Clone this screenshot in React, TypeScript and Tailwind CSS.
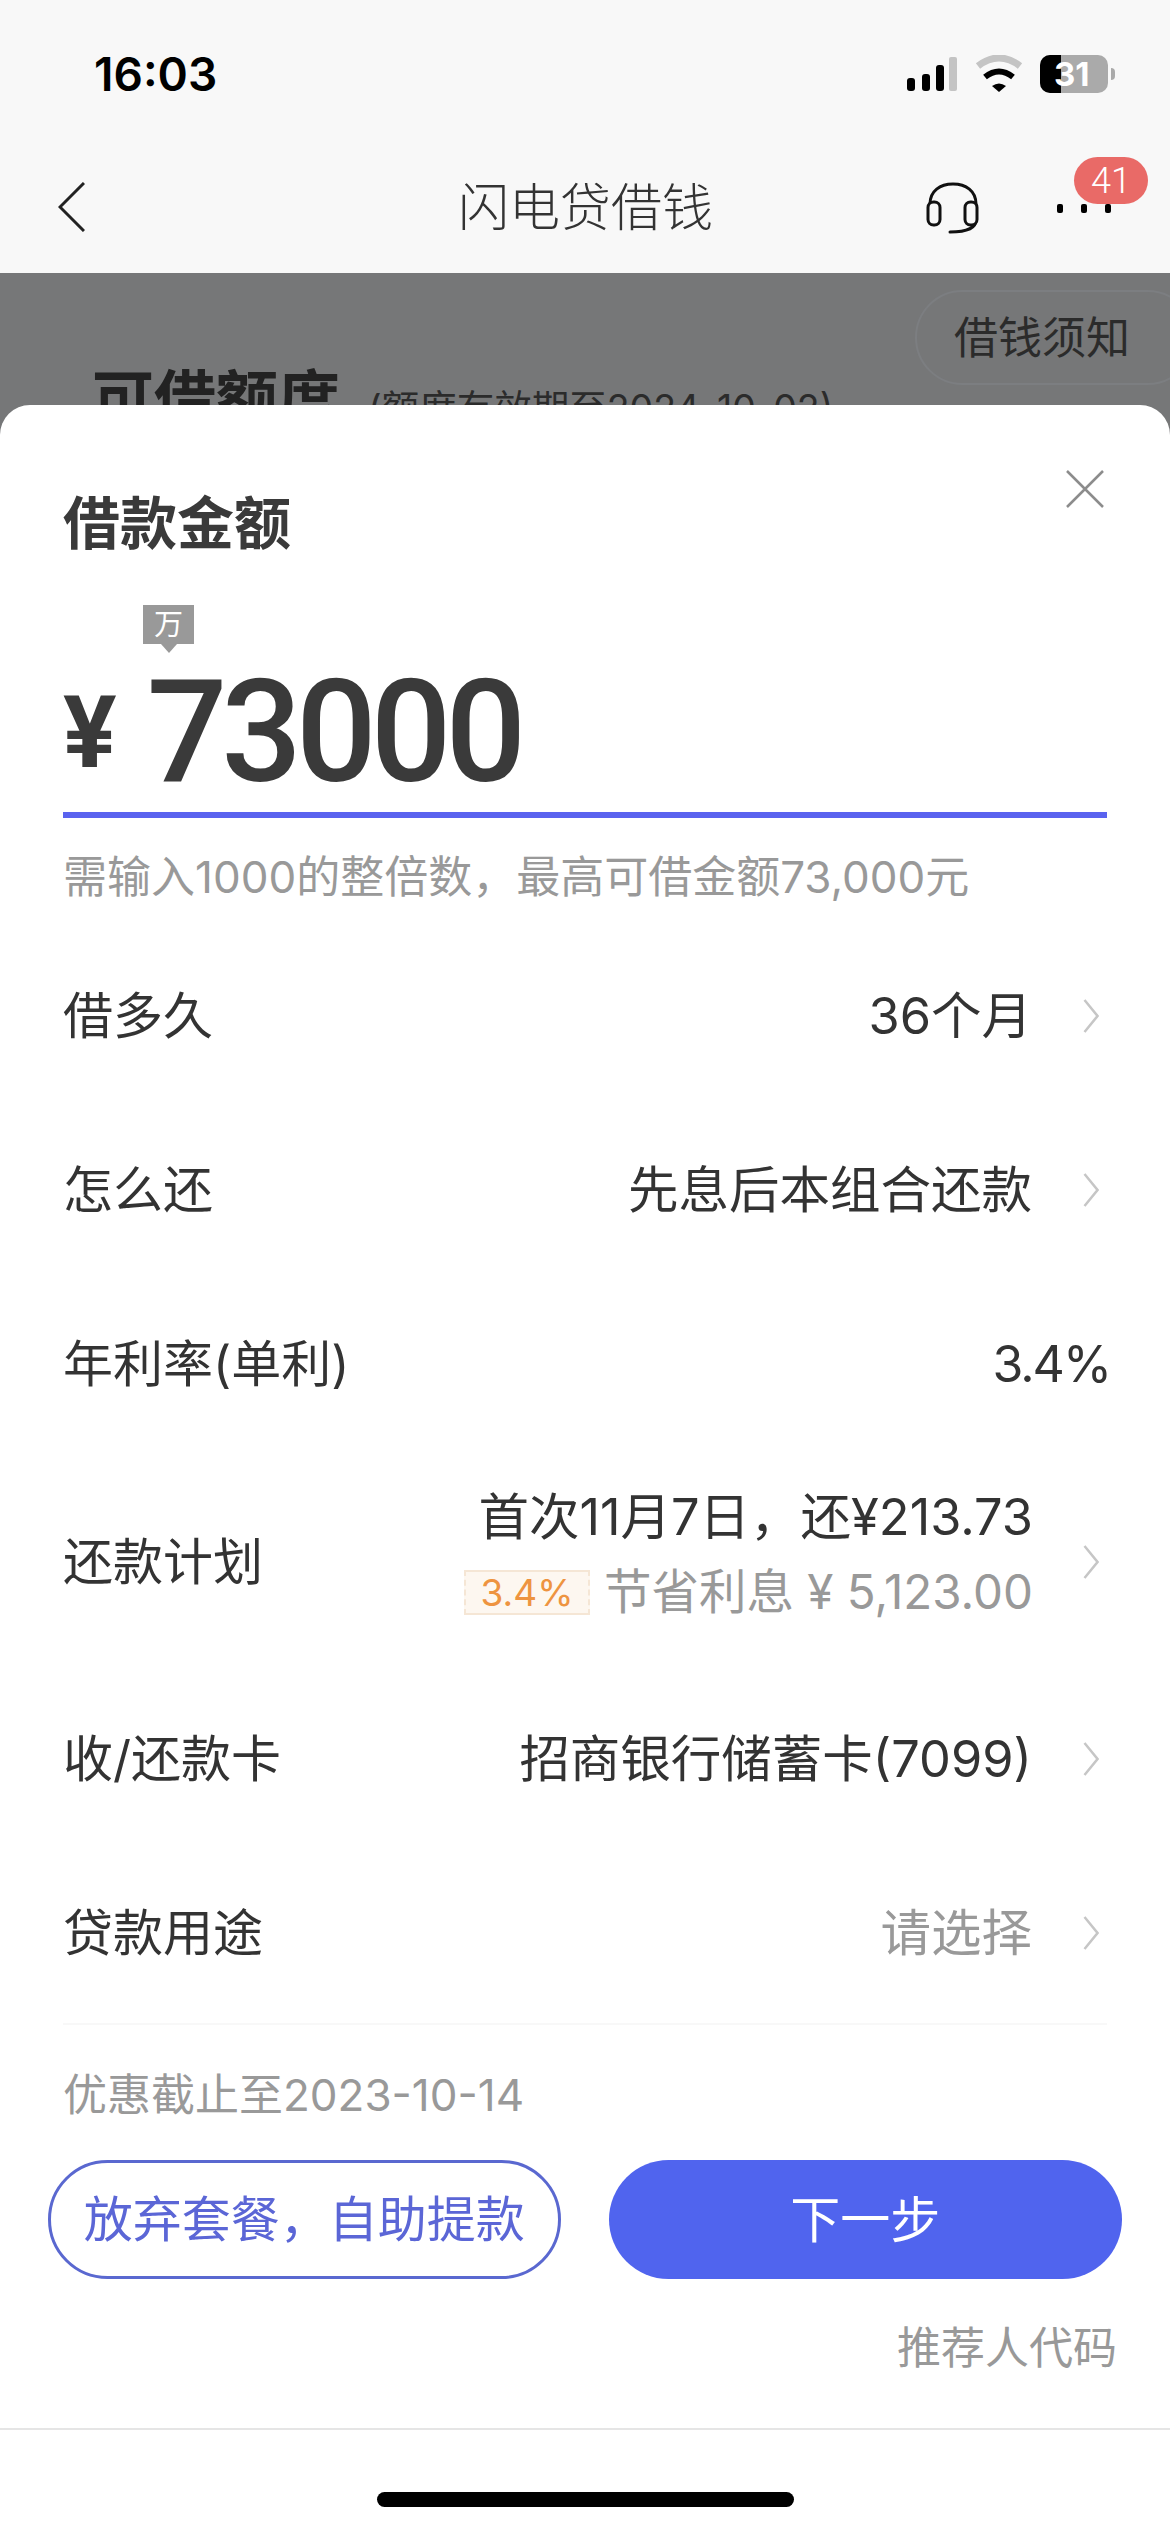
const Chevron = () => (
  <svg width="16" height="34" viewBox="0 0 16 34" fill="none" className="shrink-0">
    <path d="M1.5 1L14.5 17L1.5 33" stroke="#c6c6c6" strokeWidth="2.5" />
  </svg>
);

interface IRow {
  label: string;
  value?: string;
  muted?: boolean;
  arrow?: boolean;
  children?: React.ReactNode;
  tall?: boolean;
}
const Row = ({ label, value, muted, arrow = true, children, tall }: IRow) => {
  return (
    <div className={`flex items-center justify-between pt-[4px] ${tall ? "h-[221px]" : "h-[174px]"}`}>
      <span className="text-[50px] leading-none text-[#333]">{label}</span>
      <div className="flex items-center">
        {children ?? (
          <span className={`text-[50.5px] leading-none ${muted ? "text-[#999]" : "text-[#333]"}`}>{value}</span>
        )}
        {arrow && (
          <div className="ml-[51px] mr-[8px]">
            <Chevron />
          </div>
        )}
      </div>
    </div>
  );
};

const StatusBar = () => {
  return (
    <div className="flex h-[148px] items-start justify-between pl-[94px] pr-[55px] pt-[55px]">
      <span className="font-['Inter','Liberation_Sans',sans-serif] text-[46px] font-semibold leading-[38px] tracking-[0px] text-black">
        16:03
      </span>
      <div className="flex items-start">
        <svg width="50" height="36" viewBox="0 0 50 36" className="mt-[1px]">
          <rect x="0" y="22" width="8" height="13" rx="3" fill="#000" />
          <rect x="15" y="18" width="8" height="17" rx="3" fill="#000" />
          <rect x="29" y="9" width="8" height="26" rx="3" fill="#000" />
          <rect x="42" y="1" width="8" height="34" rx="2" fill="#c4c4c4" />
        </svg>
        <svg width="48" height="37" viewBox="0 0 48 37" fill="none" className="ml-[18px]">
          <path d="M3 11Q24 -5 45 11" stroke="#c4c4c4" strokeWidth="7" />
          <path d="M10 22Q24 11 38 22" stroke="#000" strokeWidth="6" />
          <path d="M17 31Q24 26 31 31L24 37Z" fill="#000" />
        </svg>
        <div className="ml-[17px] flex items-center">
          <div className="relative flex h-[38px] w-[68px] overflow-hidden rounded-[10px] bg-[#aaa]">
            <div className="h-full w-[21px] bg-black" />
            <span className="absolute left-[14px] top-0 font-['Inter','Liberation_Sans',sans-serif] text-[33px] font-bold leading-[38px] text-white">
              31
            </span>
          </div>
          <div className="ml-[3px] h-[12px] w-[4px] rounded-r-full bg-[#aaa]" />
        </div>
      </div>
    </div>
  );
};

const NavBar = () => {
  return (
    <div className="relative flex h-[125px] items-start justify-between pl-[58px] pr-[59px] pt-[34px]">
      <svg width="27" height="50" viewBox="0 0 27 50" fill="none">
        <path d="M26 1L2 25L26 49" stroke="#222" strokeWidth="3" />
      </svg>
      <span className="absolute left-[458px] top-[35px] text-[51px] font-light leading-[50px] text-[#333]">
        闪电贷借钱
      </span>
      <div className="flex items-start">
        <svg width="54" height="52" viewBox="0 0 54 52" fill="none" stroke="#111" strokeWidth="3">
          <path d="M4 28V22C4 9 14 2 27 2C40 2 50 9 50 22V38C50 45 42 50 24 50" strokeLinecap="round" />
          <rect x="2" y="20" width="12" height="23" rx="5.5" fill="#f8f8f8" />
          <rect x="39" y="20" width="12" height="23" rx="5.5" fill="#f8f8f8" />
        </svg>
        <div className="relative ml-[77px] flex h-[52px] gap-[18px] pt-[22px]">
          <div className="h-[9px] w-[6px] rounded-[2px] bg-black" />
          <div className="h-[9px] w-[6px] rounded-[2px] bg-black" />
          <div className="h-[9px] w-[6px] rounded-[2px] bg-black" />
          <div className="absolute left-[17px] top-[-25px] flex h-[47px] w-[74px] items-center justify-center rounded-full bg-[#e96a67] font-['Roboto',sans-serif] text-[36px] font-light leading-none text-white">
            41
          </div>
        </div>
      </div>
    </div>
  );
};

// dimmed page behind the sheet, cut off by the sheet's top edge
const Backdrop = () => {
  return (
    <div className="relative h-[132px] overflow-hidden bg-[#767778]">
      <div className="absolute left-[915px] top-[17px] flex h-[95px] w-[280px] items-center rounded-[48px] border-2 border-[#7c7e81] pl-[37px] text-[44px] leading-none text-[#2b2b2b]">
        借钱须知
      </div>
      <div className="flex items-baseline pl-[92px] pt-[92px]">
        <span className="text-[62px] font-bold leading-[70px] text-[#222]">可借额度</span>
        <span className="ml-[28px] text-[37.5px] leading-none text-[#2b2b2b]">(额度有效期至2024-10-02)</span>
      </div>
    </div>
  );
};

export default function App() {
  return (
    <div className="flex h-[2532px] w-[1170px] flex-col overflow-hidden bg-[#767778] font-['Inter','Noto_Sans_CJK_SC',sans-serif]">
      <div className="bg-[#f8f8f8]">
        <StatusBar />
        <NavBar />
      </div>
      <Backdrop />
      <div className="relative flex-1 rounded-t-[30px] bg-white px-[63px] pt-[91px]">
        <svg width="38" height="38" viewBox="0 0 38 38" fill="none" className="absolute right-[66px] top-[65px]">
          <path d="M1 1L37 37M37 1L1 37" stroke="#8c8c8c" strokeWidth="2.5" />
        </svg>

        <h1 className="text-[57px] font-bold leading-[56px] text-[#3a3a3a]">借款金额</h1>

        <div className="ml-[80px] mt-[53px] flex w-[51px] flex-col items-center">
          <div className="flex h-[39px] w-[51px] items-center justify-center bg-[#999] text-[29px] leading-none text-white">
            万
          </div>
          <div className="h-0 w-0 border-x-[8px] border-t-[9px] border-x-transparent border-t-[#999]" />
        </div>

        <div className="flex h-[159px] items-center font-['Roboto','Noto_Sans_CJK_SC',sans-serif]">
          <span className="text-[100px] font-bold leading-none text-[#3a3a3a]">¥</span>
          <span className="ml-[30px] text-[142px] font-medium leading-none tracking-[-6px] text-[#3a3a3a]">73000</span>
        </div>
        <div className="h-[6px] bg-[#5a63ef]" />
        <div className="flex h-[109px] items-center pt-[8px] text-[44px] leading-none text-[#999]">
          需输入1000的整倍数，最高可借金额73,000元
        </div>

        <Row label="借多久" value="36个月" />
        <Row label="怎么还" value="先息后本组合还款" />
        <Row label="年利率(单利)" arrow={false}>
          <span className="-mr-[3px] text-[50px] leading-none tracking-[-2px] text-[#333]">3.4%</span>
        </Row>
        <Row label="还款计划" tall>
          <div className="-mr-[1px] mb-[14px] flex flex-col items-end gap-[27px]">
            <span className="text-[50.5px] leading-[48px] text-[#333]">首次11月7日，还¥213.73</span>
            <div className="flex items-center">
              <span className="flex h-[45px] w-[126px] items-center justify-center border-2 border-[#f5e6d5] bg-[#fdf7f0] text-[37px] leading-none text-[#ee9440] [border-style:solid_dashed]">
                3.4%
              </span>
              <span className="ml-[14px] text-[47.5px] leading-[48px] text-[#999]">节省利息 ¥ 5,123.00</span>
            </div>
          </div>
        </Row>
        <Row label="收/还款卡" value="招商银行储蓄卡(7099)" />
        <Row label="贷款用途" value="请选择" muted />

        <div className="mt-[5px] h-[2px] bg-[#f8f8f8]" />
        <p className="mt-[40px] text-[44px] leading-[60px] text-[#999]">优惠截止至2023-10-14</p>

        <div className="-mx-[15px] mt-[35px] flex gap-[48px]">
          <button className="h-[119px] w-[514px] rounded-[60px] border-[3px] border-[#5a68d0] text-[49px] leading-none text-[#5b66d6]">
            放弃套餐，自助提款
          </button>
          <button className="h-[119px] w-[515px] rounded-[60px] bg-[#5064ee] text-[50px] leading-none text-white">
            下一步
          </button>
        </div>
        <p className="-mr-[10px] mt-[39px] text-right text-[44px] leading-[60px] text-[#999]">推荐人代码</p>

        <div className="-mx-[63px] mt-[50px] h-[2px] bg-[#e5e5e5]" />
        <div className="mx-auto mt-[62px] h-[15px] w-[417px] rounded-full bg-black" />
      </div>
    </div>
  );
}
